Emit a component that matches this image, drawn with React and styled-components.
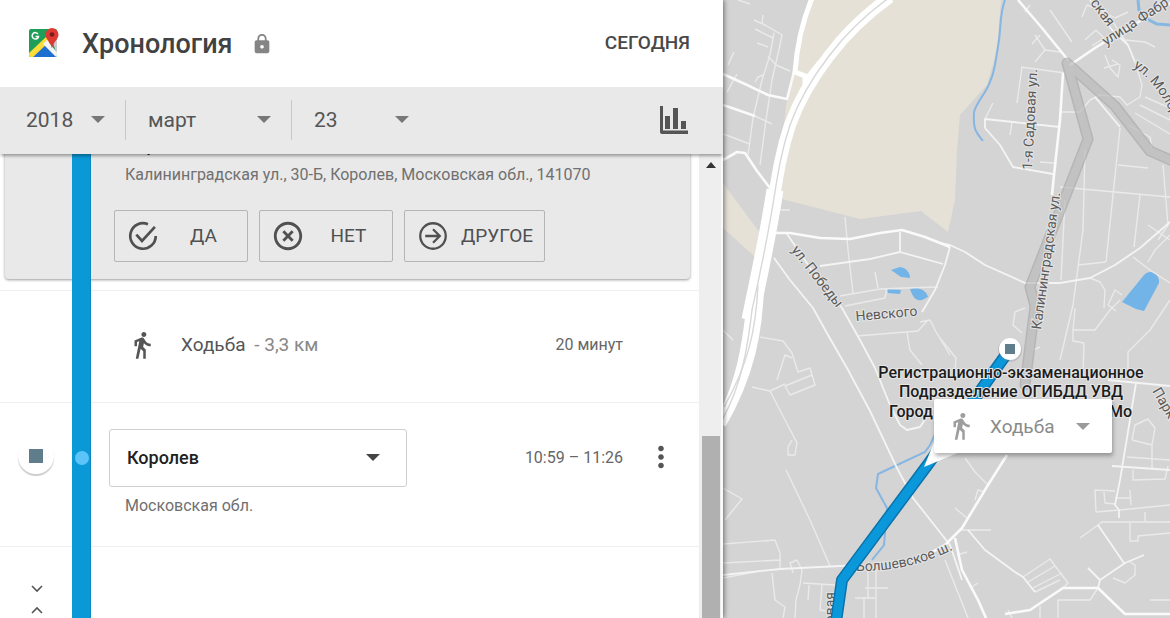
import React from "react";
import styled, { createGlobalStyle } from "styled-components";
import { MdDirectionsWalk, MdLock, MdHighlightOff, MdMoreVert } from "react-icons/md";

export default function App() {
  return (
    <>
      <GlobalStyle />
      <Page>
        <Panel>
          <Header>
            <MapsLogo />
            <Title>Хронология</Title>
            <MdLock size={22} color="#858585" />
            <TodayButton type="button">СЕГОДНЯ</TodayButton>
          </Header>
          <Toolbar>
            <DateSelect label="Год" value="2018" width="122px" />
            <DateSelect label="Месяц" value="март" width="166px" />
            <DateSelect label="День" value="23" width="138px" last />
            <ChartButton type="button" aria-label="Статистика">
              <ChartIcon />
            </ChartButton>
          </Toolbar>
          <Body>
            <Timeline>
              <Rail />
              <ConfirmRow>
                <Card>
                  <CardTitle>Королев</CardTitle>
                  <Note>Калининградская ул., 30-Б, Королев, Московская обл., 141070</Note>
                  <Answers>
                    <AnswerButton type="button">
                      <CheckIcon />
                      <span>ДА</span>
                    </AnswerButton>
                    <AnswerButton type="button">
                      <MdHighlightOff size={34} />
                      <span>НЕТ</span>
                    </AnswerButton>
                    <AnswerButton type="button">
                      <ArrowIcon />
                      <span>ДРУГОЕ</span>
                    </AnswerButton>
                  </Answers>
                </Card>
              </ConfirmRow>
              <MoveRow>
                <MdDirectionsWalk size={30} />
                <MoveName>
                  Ходьба <span>- 3,3 км</span>
                </MoveName>
                <Time>20 минут</Time>
              </MoveRow>
              <PlaceRow>
                <Marker />
                <RailDot />
                <Place>
                  <PlaceField>
                    <PlaceSelect aria-label="Место" defaultValue="Королев">
                      <option>Королев</option>
                    </PlaceSelect>
                    <Caret $color="#444" />
                  </PlaceField>
                  <Note>Московская обл.</Note>
                </Place>
                <PlaceTime>
                  <Time>10:59 – 11:26</Time>
                  <MoreButton type="button" aria-label="Ещё">
                    <MdMoreVert size={34} />
                  </MoreButton>
                </PlaceTime>
              </PlaceRow>
              <FoldButton type="button" aria-label="Развернуть">
                <svg width="14" height="32" viewBox="0 0 14 32" fill="none" stroke="#555" strokeWidth="1.6">
                  <path d="M2 3l5 5 5-5M2 30l5-5 5 5" />
                </svg>
              </FoldButton>
            </Timeline>
            <ScrollTrack>
              <ScrollArrow />
              <ScrollThumb />
            </ScrollTrack>
          </Body>
        </Panel>
        <MapArea>
          <MapDrawing />
          <ModeButton type="button">
            <MdDirectionsWalk size={30} />
            <span>Ходьба</span>
            <Caret $color="#9a9a9a" />
          </ModeButton>
        </MapArea>
      </Page>
    </>
  );
}

function DateSelect({ label, value, width, last }) {
  return (
    <DateField $width={width} $last={last}>
      <select aria-label={label} defaultValue={value}>
        <option>{value}</option>
      </select>
      <Caret $color="#777" />
    </DateField>
  );
}

function MapsLogo() {
  return (
    <svg width="32" height="32" viewBox="0 0 32 32" aria-hidden="true">
      <defs>
        <clipPath id="tile">
          <rect x="1" y="1" width="28" height="28" rx="2" />
        </clipPath>
      </defs>
      <g clipPath="url(#tile)">
        <rect width="32" height="32" fill="#1e9e58" />
        <path d="M15 15L30 30H0z" fill="#1f6fd0" />
        <path d="M24 12l6 18V10z" fill="#c9cdd2" />
        <path d="M0 26L18 9l4 4L3 31H0z" fill="#fbdc3a" />
        <path d="M15 16l4-4 12 15v5z" fill="#f4f4f4" />
      </g>
      <path d="M24 0a6.500 6.500 0 0 0-6.500 6.500c0 5 5 7 6.500 14 1.500-7 6.500-9 6.500-14A6.500 6.500 0 0 0 24 0z" fill="#dc3a32" />
      <circle cx="24" cy="6.500" r="2.300" fill="#7c1c18" />
      <path d="M10 6A3.200 3.200 0 1 0 10.500 8.500H7.500" fill="none" stroke="#fff" strokeWidth="1.500" />
    </svg>
  );
}

function ChartIcon() {
  return (
    <svg width="28" height="28" viewBox="0 0 28 28" fill="#555">
      <path d="M0 0h3v24.500h25V28H2a2 2 0 0 1-2-2z" />
      <path d="M5 10h5v13H5zM13 2h5v21h-5zM21 15h5v8h-5z" />
    </svg>
  );
}

function CheckIcon() {
  return (
    <svg width="34" height="34" viewBox="0 0 24 24" fill="none" stroke="currentColor" strokeWidth="1.900">
      <path d="M15.500 3.700A9 9 0 1 0 21 12" />
      <path d="M7.300 11l4 4.500L20.400 5.500" />
    </svg>
  );
}

function ArrowIcon() {
  return (
    <svg width="34" height="34" viewBox="0 0 24 24" fill="none" stroke="currentColor" strokeWidth="1.600">
      <circle cx="12" cy="12" r="9" />
      <path d="M6.500 12h10M12 7.200l4.800 4.800-4.800 4.800" />
    </svg>
  );
}

const wideRoads = [
  "M1018 0L1042 28L1068 60",
  "M1063 73L1060 120L1054 175L1052 195",
  "M1070 65L1098 46L1120 33L1170 3",
  "M1007 455L988 485L962 528L945 545L925 556",
  "M955 538L962 570L978 600L986 618",
  "M723 160L737 152L745 153L757 171L770 188",
  "M776 233L790 233L820 238L850 239L880 233L902 230L925 237L950 247",
  "M723 74L745 84L768 95L787 99L794 72",
  "M1005 614L1030 610L1063 588L1098 588L1125 614L1170 614",
  "M723 105L755 116",
];

const roads = [
  "M940 243L950 245L965 252L985 265L1025 283L1060 283L1090 278L1115 265L1140 248L1170 222",
  "M985 128L1000 145L1013 167L1053 174M985 128V119L1060 127",
  "M774 258L790 280L813 308L828 335L847 368L870 411L897 468L913 498L950 545L962 580",
  "M787 234L815 275L842 308L860 340L875 368L890 405L900 425L907 430L920 427L933 408",
  "M820 266L870 259L900 252L943 264M900 232V252M950 247L945 265L935 290L922 312",
  "M723 575L780 569L840 566L860 565",
  "M1112 466L1170 470M1136 383L1125 450L1120 480L1115 505L1119 510V518",
  "M1090 0L1112 30L1128 45L1135 62",
  "M1095 97L1120 127",
  "M1108 380L1170 386",
  "M968 530L985 550L1015 572L1023 577L1035 592",
  "M1098 525L1124 563M1088 568L1100 580L1125 563L1144 555M1100 580L1098 588",
];

const lanes = [
  "M754 20L765 25L782 35L780 45L772 80L766 120L760 165M774 33L770 55L762 80L753 118L748 155",
  "M755 29L773 38M757 43L768 47M763 15L762 23M768 56L776 65L790 71M755 82L758 77L763 75",
  "M734 52L728 65M737 74L727 92M723 134L750 144M755 116L772 124M738 0L750 4M778 210H790",
  "M845 217L848 250L853 293M840 296L880 289L905 288L938 287M845 306L885 298L887 288M875 272L878 288",
  "M857 336L918 331L928 320M907 332L910 350L922 365M920 322L930 320L935 330L950 355",
  "M723 330L733 340M760 337L783 341L792 353L798 372L810 368L815 385L790 395L785 386L812 375",
  "M752 387L770 391L785 384M770 391L797 443L795 455H788V447L792 440M777 380L785 355L792 358",
  "M786 470L810 520L830 566M723 488L742 499L725 520",
  "M723 544L775 540L780 553V568M723 563L780 560M723 578L760 571",
  "M772 573L775 600L785 607L783 618M793 573L790 563L797 560L802 570L800 585L796 600L795 618",
  "M803 583L835 585M822 585L820 610L833 612M809 585L808 600M868 570V598M876 565V618M865 588H888M855 598H875M864 598V618",
  "M1021 67L1065 73M1022 67L1017 103M985 119L993 103M1012 122L1010 135M1040 162L1054 163",
  "M1035 35L1045 50L1060 52M1045 50L1035 62M1050 10L1072 42M1040 35L1032 44M1030 5L1025 12",
  "M1060 112L1080 112L1090 100L1100 95L1120 97L1127 105L1140 97L1142 85L1135 62",
  "M1082 17L1087 5L1100 10L1115 18L1128 12M1085 40L1096 30L1104 38L1092 46M1115 30L1125 40L1145 42L1155 47",
  "M1105 55L1110 68L1118 77L1120 65L1112 60M1104 68L1118 64M1128 45L1105 10",
  "M1060 187L1170 197M1120 128L1106 262M1085 150L1083 230L1073 305L1060 360M1065 200L1061 280M1118 165L1148 168",
  "M1140 195L1134 247M1078 265L1106 262M1163 165L1168 225L1158 240M1148 225L1170 240M1133 257L1150 270L1170 283",
  "M1170 235L1155 250L1148 262M1108 305L1115 290L1122 295M1108 305L1116 311M1090 278L1100 282L1105 290L1104 308",
  "M1145 97L1170 108M1140 105L1170 120M1135 113L1170 134M1128 125L1150 137L1152 148",
  "M1075 308L1073 330H1095L1110 310L1120 300M1073 330V341L1084 343L1083 375",
  "M1170 300L1150 330L1128 352V372M1025 308L1015 312L1013 325L1022 333M1033 350L1040 347",
  "M1132 440L1135 425L1148 419L1155 428L1152 445L1132 440M1127 457L1170 460M1152 445V468M1133 470V480L1165 479L1168 466",
  "M1095 490L1115 491M1095 490L1096 512L1120 510L1170 505M1104 492L1105 503L1115 504M1130 490L1131 505M1115 498H1130",
  "M1080 538L1098 525L1102 522H1170M1130 523V541H1138V536L1170 533M1145 512V522",
  "M1113 578L1125 583L1135 575V565L1130 562M1058 618V600H1090L1098 588M1150 600H1170",
  "M1023 577L1050 559L1068 583L1063 588M1028 582L1055 566M1033 588L1062 573M1035 592L1060 580",
  "M965 458L975 472L988 485M975 500L978 490L985 492M960 530H991M945 560L968 618M955 508L967 518",
  "M940 338L956 358L955 372M970 588L978 583M957 555L967 552M1008 610L1012 618M1040 606V618",
];

function Roads({ list, width, color }) {
  return (
    <g fill="none" stroke={color} strokeWidth={width} strokeLinejoin="round">
      {list.map((d) => (
        <path key={d} d={d} />
      ))}
    </g>
  );
}

function MapDrawing() {
  const highway =
    "M890 -3C872 10 850 28 829 56C812 78 799 100 790 125C780 155 777 180 772 210C765 250 760 275 752 310C748 345 742 385 722 420";
  const fadedRoute = "M1025 385L1035 306L1030 287L1088 139L1067 63L1115 106L1150 151L1175 162";
  const activeRoute = "M1010 349L929 463L842 580L836 622";
  return (
    <MapSvg viewBox="723 0 447 618" preserveAspectRatio="xMinYMin slice">
      <rect x="723" width="447" height="618" fill="#d4d4d4" />
      <path
        d="M811 0H1001L997 50L987 85L960 115L957 150L955 200L948 232L921 211L860 219L778 198L786 105L795 70z"
        fill="#e5e1d6"
      />
      <path d="M723 158L760 212L755 217L723 190z" fill="#d4d4d4" />
      <path d="M723 183L760 233L755 257L723 228z" fill="#e5e1d6" />

      {/* water */}
      <g fill="none" stroke="#86b6e2" strokeWidth="2">
        <path d="M1005 0C1000 12 1001 25 999 40L995 65C990 92 978 98 974 112C973 130 976 132 983 141" />
        <path d="M937 430L930 445L925 452L878 474L876 488L887 508L884 545L872 560" />
        <path d="M1138 0L1139 10L1149 20L1157 24L1170 25" strokeWidth="3" />
      </g>
      <g fill="#72b4e8">
        <path d="M891 270L900 267C906 268 910 272 910 278L901 277z" />
        <path d="M887 289L901 290L900 294L888 293z" />
        <path d="M910 289C918 286 926 290 928 297L922 300C916 301 913 298 910 289z" />
        <path d="M1122 302L1144 275C1150 268 1160 274 1159 283L1144 311L1136 309z" />
      </g>

      <Roads list={lanes} width="1.4" color="#eaeaea" />
      <Roads list={roads} width="1.8" color="#f4f4f4" />
      <Roads list={wideRoads} width="2.6" color="#fafafa" />

      {/* highway */}
      <g fill="none" stroke="#fff">
        <path d="M812 -2C803 20 797 45 795 72L808 77L820 62" strokeWidth="5" />
        <path d="M806 74V92" strokeWidth="7" />
        <path d={highway} strokeWidth="12" />
        <path d="M775 190C768 235 762 262 754 300L750 320" strokeWidth="17" />
        <path d="M761 285C760 330 752 375 723 425" strokeWidth="6" />
      </g>
      <g fill="none" stroke="#d8d8d8" strokeWidth="1.4">
        <path d={highway} />
        <path d="M758 285C756 330 748 365 724 407" />
      </g>

      {/* faded route */}
      <g fill="none" strokeLinejoin="round" strokeLinecap="round" opacity="0.65">
        <path d={fadedRoute} stroke="#a6a6a6" strokeWidth="11" />
        <path d={fadedRoute} stroke="#b9b9b9" strokeWidth="8" />
      </g>

      <StreetNames>
        <path id="bolsh" d="M856 571Q910 572 954 549" fill="none" stroke="none" />
        <path id="molod" d="M1133 67Q1160 84 1176 126" fill="none" stroke="none" />
        <text transform="translate(1032 170) rotate(-87)">1-я Садовая ул.</text>
        <text transform="translate(1041 330) rotate(-82)">Калининградская ул.</text>
        <text transform="translate(791 250) rotate(52)">ул. Победы</text>
        <text transform="translate(856 321) rotate(-5)">Невского</text>
        <text transform="translate(1106 46) rotate(-33)">улица Фабр</text>
        <text transform="translate(1090 3) rotate(53)">ская</text>
        <text transform="translate(1152 391) rotate(60)">Парк</text>
        <text transform="translate(835 592) rotate(-90)" textAnchor="end">
          рвая
        </text>
        <text>
          <textPath href="#bolsh">Болшевское ш.</textPath>
        </text>
        <text>
          <textPath href="#molod">ул. Молод</textPath>
        </text>
      </StreetNames>

      {/* active route */}
      <g fill="none" strokeLinejoin="round">
        <path d={activeRoute} stroke="#0a72ab" strokeWidth="12" />
        <path d={activeRoute} stroke="#0a98da" strokeWidth="9" />
      </g>
      <circle cx="1010" cy="350" r="12" fill="#777" opacity="0.25" />
      <circle cx="1010" cy="349" r="11" fill="#fff" />
      <rect x="1005" y="344" width="10" height="10" fill="#607d8b" />

      <PlaceNames>
        <text x="1011" y="378" textAnchor="middle">Регистрационно-экзаменационное</text>
        <text x="1011" y="397" textAnchor="middle">Подразделение ОГИБДД УВД</text>
        <text x="889" y="417">Город</text>
        <text x="1132" y="417" textAnchor="end">Мо</text>
      </PlaceNames>
      <path d="M935 440L924 467L960 452z" fill="#fff" />
    </MapSvg>
  );
}

const GlobalStyle = createGlobalStyle`
  * {
    box-sizing: border-box;
  }
  body {
    margin: 0;
    font-family: Roboto, "Noto Sans", sans-serif;
    color: #555;
    background: #fff;
  }
  button,
  select {
    font-family: inherit;
    margin: 0;
    padding: 0;
    border: 0;
    background: none;
    color: inherit;
    cursor: pointer;
  }
  svg {
    display: block;
    flex-shrink: 0;
  }
`;

const Page = styled.div`
  display: grid;
  grid-template-columns: 723fr 447fr;
  height: 100vh;
  overflow: hidden;
`;

const Panel = styled.main`
  display: flex;
  flex-direction: column;
  min-width: 0;
  min-height: 0;
  background: #fff;
  z-index: 1;
  box-shadow: 1px 0 5px rgba(0, 0, 0, 0.5);
`;

const Header = styled.header`
  display: flex;
  align-items: center;
  height: 87px;
  padding: 0 33px 0 28px;
`;

const Title = styled.h1`
  margin: 0 18px 0 22px;
  font-size: 27px;
  font-weight: 500;
  color: #424242;
`;

const TodayButton = styled.button`
  margin-left: auto;
  padding-bottom: 3px;
  font-size: 19px;
  font-weight: 500;
  color: #484848;
`;

const Toolbar = styled.div`
  display: flex;
  align-items: center;
  height: 67px;
  padding: 0 35px 2px 4px;
  background: #e9e9e9;
  box-shadow: 0 3px 3px -1px rgba(0, 0, 0, 0.35);
  z-index: 1;
`;

const Caret = styled.span`
  width: 0;
  height: 0;
  border: 7px solid transparent;
  border-top-color: ${({ $color }) => $color};
  border-bottom: 0;
  pointer-events: none;
`;

const DateField = styled.div`
  display: flex;
  align-items: center;
  width: ${({ $width }) => $width};
  height: 40px;
  border-right: 1px solid ${({ $last }) => ($last ? "transparent" : "#c8c8c8")};
  padding: 0 20px 0 22px;
  select {
    flex: 1;
    min-width: 0;
    appearance: none;
    font-size: 21px;
    color: #555;
  }
`;

const ChartButton = styled.button`
  margin-left: auto;
`;

const Body = styled.div`
  display: flex;
  flex: 1;
  min-height: 0;
`;

const Timeline = styled.div`
  position: relative;
  flex: 1;
  min-width: 0;
  overflow: hidden;
`;

const Rail = styled.div`
  position: absolute;
  top: 0;
  bottom: 0;
  left: 72px;
  width: 19px;
  background: #0a98d6;
  border-right: 1px solid #0a86c0;
`;

const Row = styled.section`
  border-bottom: 1px solid #efefef;
`;

const ConfirmRow = styled(Row)`
  padding: 0 9px 11px 5px;
`;

const Card = styled.div`
  padding: 0 20px 17px 109px;
  background: #e9e9e9;
  border-radius: 0 0 4px 4px;
  box-shadow: 0 1px 3px rgba(0, 0, 0, 0.4);
`;

/* scrolled away under the toolbar */
const CardTitle = styled.h2`
  margin: -18px 0 0 12px;
  font-size: 17px;
  line-height: 20px;
  font-weight: 500;
  color: #222;
`;

const Note = styled.p`
  margin: 9px 0 0;
  padding-left: 11px;
  font-size: 16px;
  line-height: 20px;
  color: #707070;
`;

const Answers = styled.div`
  display: flex;
  gap: 11px;
  margin-top: 25px;
`;

const AnswerButton = styled.button`
  display: flex;
  align-items: center;
  min-width: 134px;
  height: 52px;
  padding: 0 11px;
  border: 1px solid #b5b5b5;
  border-radius: 2px;
  font-size: 19px;
  color: #505050;
  span {
    flex: 1;
    margin-left: 11px;
    padding-bottom: 2px;
    text-align: center;
  }
`;

const MoveRow = styled(Row)`
  display: flex;
  align-items: center;
  height: 112px;
  padding: 0 76px 4px 127px;
`;

const MoveName = styled.div`
  flex: 1;
  margin-left: 24px;
  font-size: 19px;
  color: #555;
  span {
    margin-left: 4px;
    color: #888;
  }
`;

const Time = styled.div`
  font-size: 16px;
  color: #666;
`;

const PlaceRow = styled(Row)`
  display: grid;
  grid-template-columns: 72px 19px 316px 1fr;
  height: 144px;
  padding-top: 26px;
`;

const Marker = styled.div`
  justify-self: center;
  display: grid;
  place-items: center;
  width: 36px;
  height: 36px;
  margin-top: 9px;
  border-radius: 50%;
  background: #fff;
  box-shadow: 0 2px 1px rgba(0, 0, 0, 0.2);
  &::before {
    content: "";
    width: 14px;
    height: 14px;
    background: #607d8b;
  }
`;

const RailDot = styled.div`
  z-index: 1;
  justify-self: center;
  width: 14px;
  height: 14px;
  margin-top: 22px;
  border-radius: 50%;
  background: #5cc4f8;
`;

const Place = styled.div`
  padding-left: 18px;
  ${Note} {
    padding-left: 16px;
  }
`;

const PlaceField = styled.div`
  display: flex;
  align-items: center;
  height: 58px;
  padding: 0 26px 2px 17px;
  border: 1px solid #cfcfcf;
  border-radius: 3px;
`;

const PlaceSelect = styled.select`
  flex: 1;
  min-width: 0;
  appearance: none;
  font-size: 18px;
  font-weight: 500;
  color: #222;
`;

const PlaceTime = styled.div`
  display: flex;
  align-items: center;
  justify-content: flex-end;
  height: 58px;
  padding: 0 21px 2px 0;
`;

const MoreButton = styled.button`
  margin-left: 21px;
`;

const FoldButton = styled.button`
  display: block;
  margin: 36px 0 0 30px;
`;

const ScrollTrack = styled.div`
  display: flex;
  flex-direction: column;
  align-items: center;
  width: 24px;
  padding: 8px 0 0 2px;
  background: #eee;
  border-right: 2px solid #fafafa;
`;

const ScrollArrow = styled.div`
  border: 5px solid transparent;
  border-bottom: 6px solid #333;
  border-top: 0;
`;

const ScrollThumb = styled.div`
  flex: 1;
  width: 18px;
  margin-top: 268px;
  background: #b0b0b0;
`;

const MapArea = styled.div`
  position: relative;
  min-width: 0;
  overflow: hidden;
`;

const MapSvg = styled.svg`
  width: 100%;
  height: 100%;
`;

const StreetNames = styled.g`
  font-size: 14px;
  fill: #5a5a5a;
  stroke: #e6e6e6;
  stroke-width: 2px;
  paint-order: stroke;
`;

const PlaceNames = styled.g`
  font-size: 16px;
  font-weight: 500;
  fill: #1c1c1c;
  stroke: #e6e6e6;
  stroke-width: 2px;
  paint-order: stroke;
`;

const ModeButton = styled.button`
  position: absolute;
  top: 399px;
  left: 211px;
  display: flex;
  align-items: center;
  gap: 14px;
  width: 178px;
  height: 54px;
  padding: 0 22px 0 12px;
  background: #fff;
  border-radius: 2px;
  box-shadow: 1px 3px 4px rgba(0, 0, 0, 0.3);
  font-size: 19px;
  color: #8a8a8a;
  svg {
    color: #9e9e9e;
  }
  span:last-child {
    margin-left: auto;
  }
`;
